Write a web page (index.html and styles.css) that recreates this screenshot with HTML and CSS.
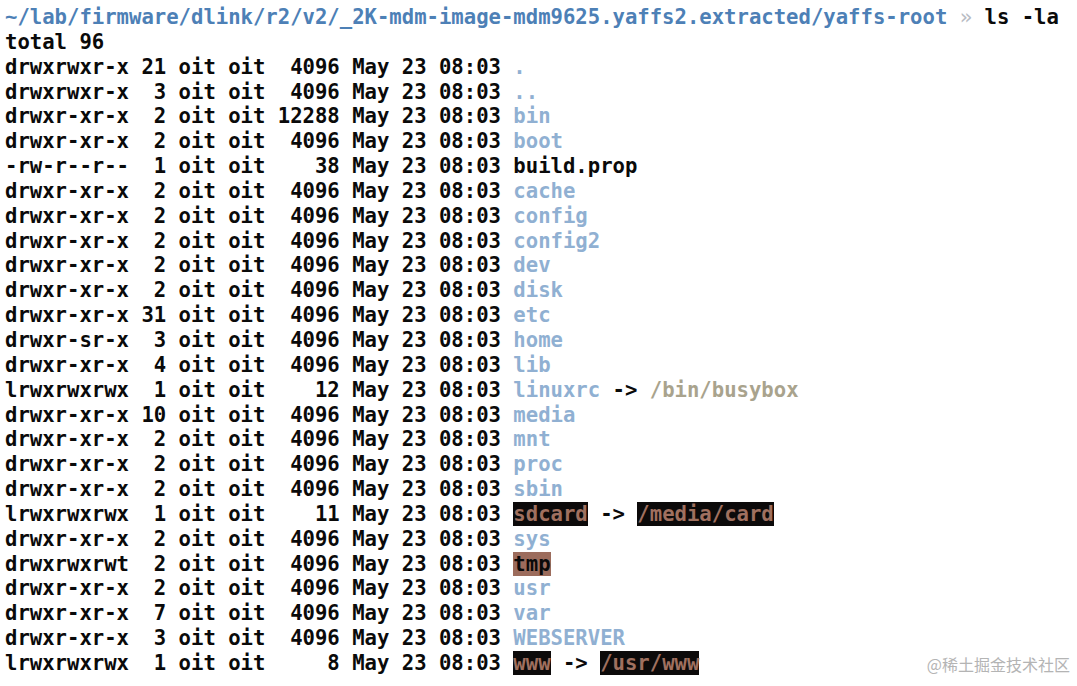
FILE: index.html
```html
<!DOCTYPE html>
<html>
<head>
<meta charset="utf-8">
<link rel="stylesheet" href="styles.css">
</head>
<body>
<pre class="term"><span class="cwd">~/lab/firmware/dlink/r2/v2/_2K-mdm-image-mdm9625.yaffs2.extracted/yaffs-root</span> <span class="arrow">»</span> ls -la
total 96
drwxrwxr-x 21 oit oit  4096 May 23 08:03 <span class="dir">.</span>
drwxrwxr-x  3 oit oit  4096 May 23 08:03 <span class="dir">..</span>
drwxr-xr-x  2 oit oit 12288 May 23 08:03 <span class="dir">bin</span>
drwxr-xr-x  2 oit oit  4096 May 23 08:03 <span class="dir">boot</span>
-rw-r--r--  1 oit oit    38 May 23 08:03 build.prop
drwxr-xr-x  2 oit oit  4096 May 23 08:03 <span class="dir">cache</span>
drwxr-xr-x  2 oit oit  4096 May 23 08:03 <span class="dir">config</span>
drwxr-xr-x  2 oit oit  4096 May 23 08:03 <span class="dir">config2</span>
drwxr-xr-x  2 oit oit  4096 May 23 08:03 <span class="dir">dev</span>
drwxr-xr-x  2 oit oit  4096 May 23 08:03 <span class="dir">disk</span>
drwxr-xr-x 31 oit oit  4096 May 23 08:03 <span class="dir">etc</span>
drwxr-sr-x  3 oit oit  4096 May 23 08:03 <span class="dir">home</span>
drwxr-xr-x  4 oit oit  4096 May 23 08:03 <span class="dir">lib</span>
lrwxrwxrwx  1 oit oit    12 May 23 08:03 <span class="dir">linuxrc</span> -&gt; <span class="target">/bin/busybox</span>
drwxr-xr-x 10 oit oit  4096 May 23 08:03 <span class="dir">media</span>
drwxr-xr-x  2 oit oit  4096 May 23 08:03 <span class="dir">mnt</span>
drwxr-xr-x  2 oit oit  4096 May 23 08:03 <span class="dir">proc</span>
drwxr-xr-x  2 oit oit  4096 May 23 08:03 <span class="dir">sbin</span>
lrwxrwxrwx  1 oit oit    11 May 23 08:03 <span class="broken">sdcard</span> -&gt; <span class="broken">/media/card</span>
drwxr-xr-x  2 oit oit  4096 May 23 08:03 <span class="dir">sys</span>
drwxrwxrwt  2 oit oit  4096 May 23 08:03 <span class="sticky">tmp</span>
drwxr-xr-x  2 oit oit  4096 May 23 08:03 <span class="dir">usr</span>
drwxr-xr-x  7 oit oit  4096 May 23 08:03 <span class="dir">var</span>
drwxr-xr-x  3 oit oit  4096 May 23 08:03 <span class="dir">WEBSERVER</span>
lrwxrwxrwx  1 oit oit     8 May 23 08:03 <span class="broken">www</span> -&gt; <span class="broken">/usr/www</span></pre>
<div class="watermark">@稀土掘金技术社区</div>
</body>
</html>
```

FILE: styles.css
```css
html, body {
  margin: 0;
  padding: 0;
  background: #ffffff;
}
body {
  width: 1077px;
  height: 686px;
  overflow: hidden;
  position: relative;
}
.term {
  margin: 0;
  padding: 5px 0 0 5px;
  font-family: "DejaVu Sans Mono", "Liberation Mono", monospace;
  font-weight: bold;
  font-size: 20.6px;
  line-height: 24.85px;
  color: #0a0a0a;
}
.cwd {
  color: #4d80b6;
}
.arrow {
  color: #b8bcc4;
  font-weight: normal;
}
.dir {
  color: #90b0d2;
}
.target {
  color: #a9a38d;
}
.broken {
  background: #0c0a0a;
  color: #a0705f;
}
.sticky {
  background: #9c6c5c;
  color: #0a0a0a;
}
.watermark {
  position: absolute;
  right: 7px;
  bottom: 10px;
  font-family: "Noto Sans CJK SC", "Noto Sans", sans-serif;
  font-size: 16px;
  color: #b4b4b4;
}
```
